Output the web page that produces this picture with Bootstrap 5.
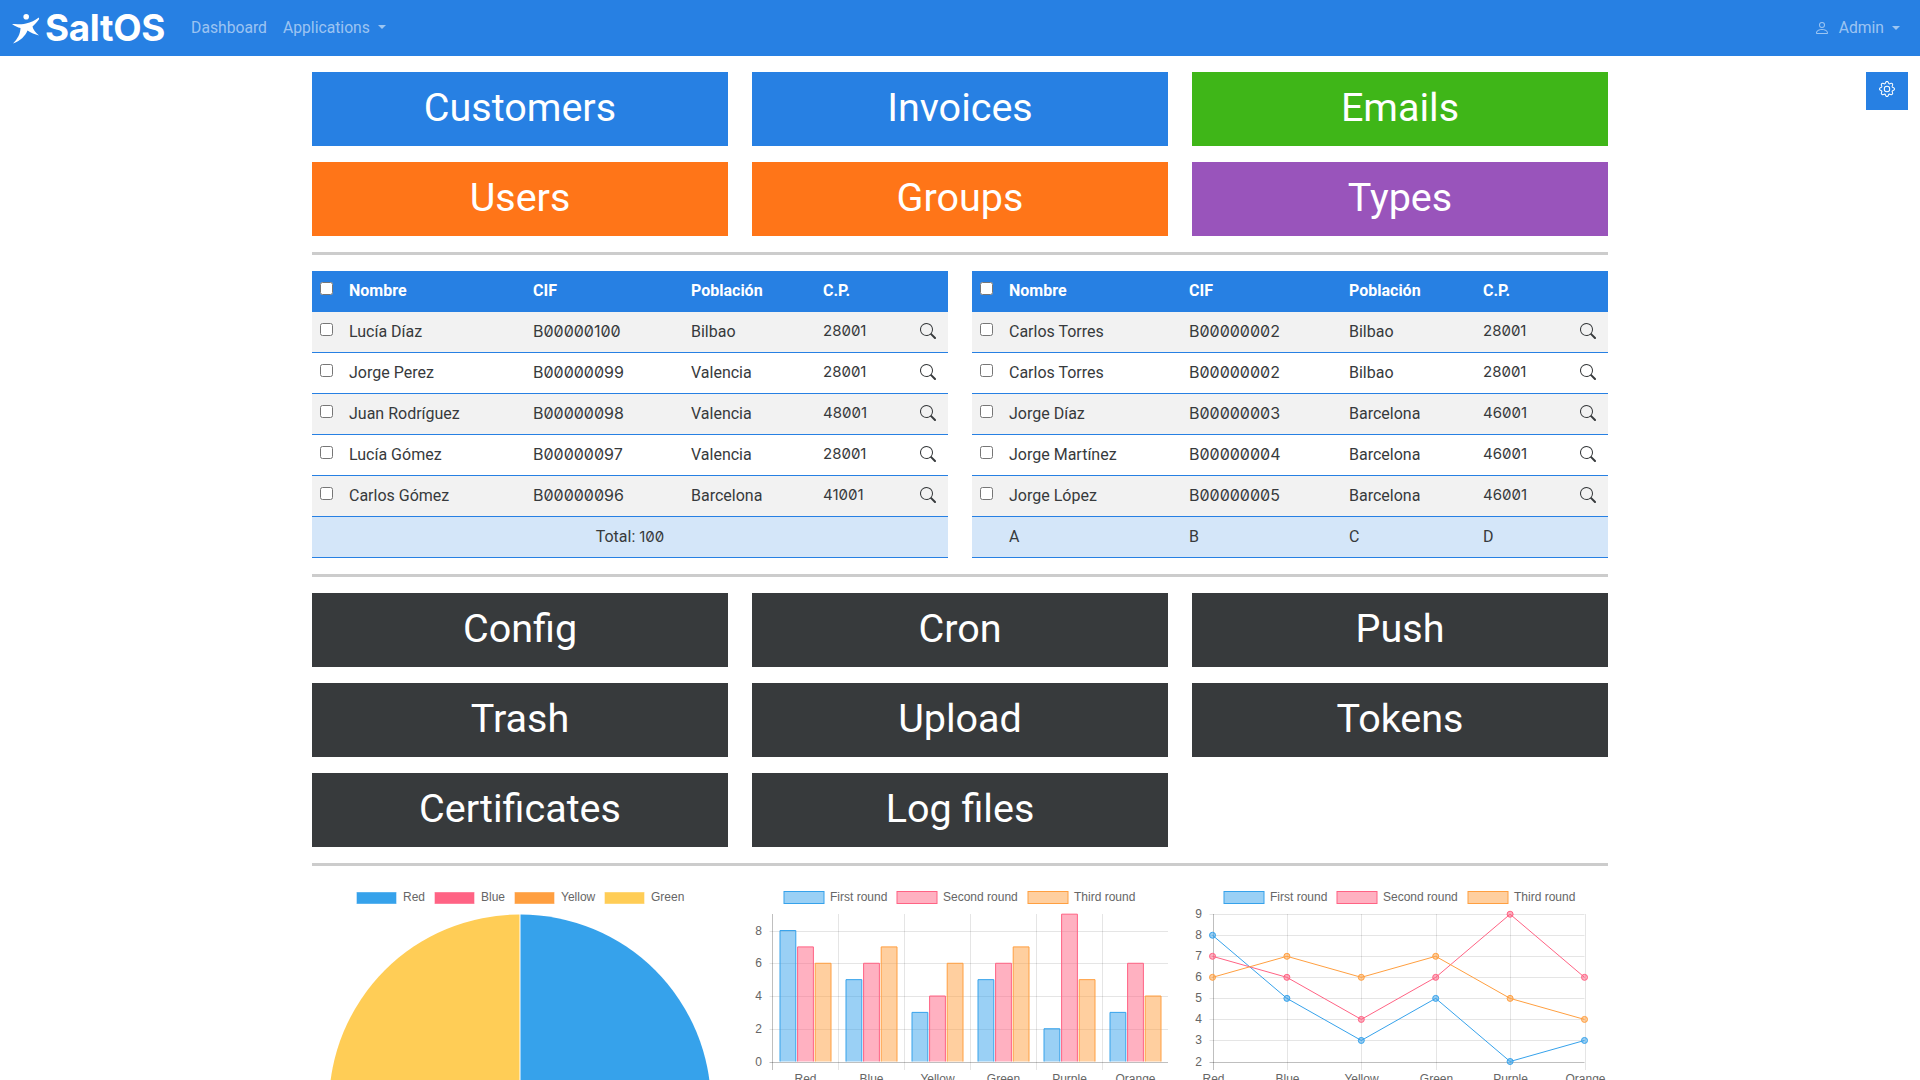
<!DOCTYPE html>
<html lang="en">
  <head>
    <meta charset="UTF-8" />
    <meta name="viewport" content="width=device-width, initial-scale=1.0" />
    <title>SaltOS</title>
    <link
      href="https://cdn.jsdelivr.net/npm/bootstrap@5.3.5/dist/css/bootstrap.min.css"
      rel="stylesheet"
    />
    <style>
      html,
      body {
        height: 100vh;
        overflow: hidden;
      }
      body {
        font-family: Roboto, "Liberation Sans", sans-serif;
        color: #373a3c;
      }
      .app-navbar {
        background: #2780e3;
        height: 56px;
        padding: 0;
      }
      .app-navbar .container-fluid {
        padding: 0 12px;
      }
      .app-navbar .nav-link {
        font-size: 15.7px;
      }
      .app-navbar .dropdown-toggle::after {
        margin-left: 8px;
      }
      .brand-text {
        font-family: Inter, sans-serif;
        font-weight: 700;
        font-size: 36.8px;
        line-height: 40px;
        color: #fff;
        letter-spacing: -0.3px;
      }
      .app-brand {
        padding: 0;
        margin-right: 18px;
        gap: 5px;
      }
      .brand-icon {
        margin-top: 1px;
      }
      .user-icon {
        margin-right: 9px;
      }
      .settings-btn {
        position: absolute;
        top: 72px;
        right: 12px;
        width: 42px;
        height: 38px;
        border-radius: 0;
        background: #2780e3;
        border: 0;
        padding: 0 0 4px;
        display: flex;
        align-items: center;
        justify-content: center;
      }
      .page-wrap {
        width: 1296px;
        margin: 16px auto 0;
      }
      .big-btn {
        display: block;
        width: 100%;
        border-radius: 0;
        font-size: 39.5px;
        line-height: 60px;
        padding: 5px 12px 7px;
        color: #fff;
        border: 1px solid transparent;
      }
      .big-blue {
        background: #2780e3;
      }
      .big-green {
        background: #3fb618;
      }
      .big-orange {
        background: #ff7518;
      }
      .big-purple {
        background: #9954bb;
      }
      .big-dark {
        background: #373a3c;
      }
      .btn-grid {
        display: grid;
        grid-template-columns: repeat(3, 416px);
        gap: 16px 24px;
      }
      .sep-line {
        height: 3px;
        background: #ccc;
        margin: 16px 0 16px;
        border: 0;
        opacity: 1;
      }
      .tables-row {
        display: grid;
        grid-template-columns: 636px 636px;
        gap: 24px;
      }
      .data-table {
        table-layout: fixed;
        width: 100%;
        margin: 0;
        --bs-table-color: #373a3c;
        font-size: 16px;
      }
      .data-table th,
      .data-table td {
        padding: 8px;
        line-height: 24px;
        vertical-align: top;
        border-bottom: 1px solid #2780e3;
        overflow: hidden;
        white-space: nowrap;
      }
      .data-table thead th {
        background: #2780e3;
        color: #fff;
        font-weight: 700;
      }
      .data-table tbody tr:nth-child(odd) td {
        background: #f2f2f2;
      }
      .data-table tfoot td {
        background: #d4e6f9;
      }
      .data-table input {
        display: block;
        width: 13px;
        height: 13px;
        margin: 3px 0 0;
      }
      .num-cell {
        font-family: Inter, sans-serif;
        font-size: 15px;
        font-variant-numeric: slashed-zero;
        font-feature-settings: "zero" 1;
      }
      .data-table td.num-cell {
        padding-top: 7px;
        padding-bottom: 9px;
      }
      .data-table td.cif-cell {
        font-size: 16px;
      }
      .lens {
        display: block;
        margin: 3px 0 0 9px;
      }
      .chart-row {
        display: grid;
        grid-template-columns: repeat(3, 416px);
        gap: 24px;
        margin-top: -2px;
      }
      .chart-row svg {
        display: block;
      }
      .chart-row text {
        font-family: "Liberation Sans", sans-serif;
        font-size: 12px;
        fill: #666;
      }
    </style>
    <script src="https://cdn.jsdelivr.net/npm/bootstrap@5.3.5/dist/js/bootstrap.bundle.min.js"></script>
  </head>
  <body>
    <nav class="navbar navbar-expand-lg navbar-dark app-navbar">
      <div class="container-fluid">
        <a href="#" class="navbar-brand app-brand d-flex align-items-center">
          <svg class="brand-icon" width="28" height="30" viewBox="0 0 28 30" fill="#fff">
            <circle cx="14.2" cy="2.8" r="2.8" />
            <path d="M0 10 C5 9.5 10 11 14 9.5 C19 8.5 23 6.5 26.8 3.5 L27.2 5 C25 8 22.5 10.5 20.5 12.5 C21 15.5 23.5 18.5 27 21.5 C23 20.5 18.5 18.5 15.5 16.5 C13.5 22 8 27 1 29.5 C5.5 25 8.5 19.5 8.5 14 C5.5 13.5 3 12 0 10 Z" />
          </svg>
          <span class="brand-text">SaltOS</span>
        </a>
        <ul class="navbar-nav me-auto">
          <li class="nav-item"><a href="#" class="nav-link">Dashboard</a></li>
          <li class="nav-item dropdown">
            <a href="#" class="nav-link dropdown-toggle" data-bs-toggle="dropdown">Applications</a>
          </li>
        </ul>
        <ul class="navbar-nav">
          <li class="nav-item dropdown">
            <a href="#" class="nav-link dropdown-toggle d-flex align-items-center" data-bs-toggle="dropdown">
              <svg class="user-icon" width="16" height="16" viewBox="0 0 16 16" fill="currentColor">
                <path d="M8 8a3 3 0 1 0 0-6 3 3 0 0 0 0 6Zm2-3a2 2 0 1 1-4 0 2 2 0 0 1 4 0Zm4 8c0 1-1 1-1 1H3s-1 0-1-1 1-4 6-4 6 3 6 4Zm-1-.004c-.001-.246-.154-.986-.832-1.664C11.516 10.68 10.289 10 8 10c-2.29 0-3.516.68-4.168 1.332-.678.678-.83 1.418-.832 1.664h10Z" />
              </svg>
              Admin
            </a>
          </li>
        </ul>
      </div>
    </nav>

    <button class="btn settings-btn" type="button" aria-label="Settings">
      <svg width="16" height="16" viewBox="0 0 16 16" fill="#fff">
        <path d="M8 4.754a3.246 3.246 0 1 0 0 6.492 3.246 3.246 0 0 0 0-6.492ZM5.754 8a2.246 2.246 0 1 1 4.492 0 2.246 2.246 0 0 1-4.492 0Z" />
        <path d="M9.796 1.343c-.527-1.79-3.065-1.79-3.592 0l-.094.319a.873.873 0 0 1-1.255.52l-.292-.16c-1.64-.892-3.433.902-2.54 2.541l.159.292a.873.873 0 0 1-.52 1.255l-.319.094c-1.79.527-1.79 3.065 0 3.592l.319.094a.873.873 0 0 1 .52 1.255l-.16.292c-.892 1.64.901 3.434 2.541 2.54l.292-.159a.873.873 0 0 1 1.255.52l.094.319c.527 1.79 3.065 1.79 3.592 0l.094-.319a.873.873 0 0 1 1.255-.52l.292.16c1.64.893 3.434-.902 2.54-2.541l-.159-.292a.873.873 0 0 1 .52-1.255l.319-.094c1.79-.527 1.79-3.065 0-3.592l-.319-.094a.873.873 0 0 1-.52-1.255l.16-.292c.893-1.64-.902-3.433-2.541-2.54l-.292.159a.873.873 0 0 1-1.255-.52l-.094-.319Zm-2.633.283c.246-.835 1.428-.835 1.674 0l.094.319a1.873 1.873 0 0 0 2.693 1.115l.291-.16c.764-.415 1.6.42 1.184 1.185l-.159.292a1.873 1.873 0 0 0 1.116 2.692l.318.094c.835.246.835 1.428 0 1.674l-.319.094a1.873 1.873 0 0 0-1.115 2.693l.16.291c.415.764-.42 1.6-1.185 1.184l-.291-.159a1.873 1.873 0 0 0-2.693 1.116l-.094.318c-.246.835-1.428.835-1.674 0l-.094-.319a1.873 1.873 0 0 0-2.692-1.115l-.292.16c-.764.415-1.6-.42-1.184-1.185l.159-.291A1.873 1.873 0 0 0 1.945 8.93l-.319-.094c-.835-.246-.835-1.428 0-1.674l.319-.094A1.873 1.873 0 0 0 3.06 4.377l-.16-.292c-.415-.764.42-1.6 1.185-1.184l.292.159a1.873 1.873 0 0 0 2.692-1.115l.094-.319Z" />
      </svg>
    </button>

    <main class="page-wrap">
      <div class="btn-grid">
        <a href="#" class="btn big-btn big-blue">Customers</a>
        <a href="#" class="btn big-btn big-blue">Invoices</a>
        <a href="#" class="btn big-btn big-green">Emails</a>
        <a href="#" class="btn big-btn big-orange">Users</a>
        <a href="#" class="btn big-btn big-orange">Groups</a>
        <a href="#" class="btn big-btn big-purple">Types</a>
      </div>
      <hr class="sep-line" />
      <div class="tables-row">
        <div id="tableLeft"></div>
        <div id="tableRight"></div>
      </div>
      <hr class="sep-line" />
      <div class="btn-grid">
        <a href="#" class="btn big-btn big-dark">Config</a>
        <a href="#" class="btn big-btn big-dark">Cron</a>
        <a href="#" class="btn big-btn big-dark">Push</a>
        <a href="#" class="btn big-btn big-dark">Trash</a>
        <a href="#" class="btn big-btn big-dark">Upload</a>
        <a href="#" class="btn big-btn big-dark">Tokens</a>
        <a href="#" class="btn big-btn big-dark">Certificates</a>
        <a href="#" class="btn big-btn big-dark">Log files</a>
      </div>
      <hr class="sep-line" />
      <div class="chart-row">
        <svg id="chartPie" width="416" height="200"></svg>
        <svg id="chartBar" width="416" height="210"></svg>
        <svg id="chartLine" width="416" height="210"></svg>
      </div>
    </main>

    <script>
      const lens =
        '<svg class="lens" width="16" height="16" viewBox="0 0 16 16" fill="#373a3c"><path d="M11.742 10.344a6.5 6.5 0 1 0-1.397 1.398h-.001c.03.04.062.078.098.115l3.85 3.85a1 1 0 0 0 1.415-1.414l-3.85-3.85a1.007 1.007 0 0 0-.115-.1zM12 6.5a5.5 5.5 0 1 1-11 0 5.5 5.5 0 0 1 11 0z"/></svg>';

      function buildTable(target, widths, rows, foot) {
        let html = '<table class="table data-table"><colgroup>';
        for (let i = 0; i < widths.length; i++) {
          html += `<col style="width:${widths[i]}px">`;
        }
        html += "</colgroup><thead><tr><th><input type='checkbox'></th>";
        html += "<th>Nombre</th><th>CIF</th><th>Población</th><th>C.P.</th><th></th></tr></thead><tbody>";
        for (let i = 0; i < rows.length; i++) {
          html += `<tr><td><input type="checkbox"></td><td>${rows[i][0]}</td><td class="num-cell cif-cell">${rows[i][1]}</td><td>${rows[i][2]}</td><td class="num-cell">${rows[i][3]}</td><td>${lens}</td></tr>`;
        }
        html += `</tbody><tfoot>${foot}</tfoot></table>`;
        document.querySelector(target).innerHTML = html;
      }

      buildTable(
        "#tableLeft",
        [29, 184, 158, 132, 88, 45],
        [
          ["Lucía Díaz", "B00000100", "Bilbao", "28001"],
          ["Jorge Perez", "B00000099", "Valencia", "28001"],
          ["Juan Rodríguez", "B00000098", "Valencia", "48001"],
          ["Lucía Gómez", "B00000097", "Valencia", "28001"],
          ["Carlos Gómez", "B00000096", "Barcelona", "41001"],
        ],
        '<tr><td colspan="6" class="text-center">Total: <span class="num-cell">100</span></td></tr>'
      );

      buildTable(
        "#tableRight",
        [29, 180, 160, 134, 88, 45],
        [
          ["Carlos Torres", "B00000002", "Bilbao", "28001"],
          ["Carlos Torres", "B00000002", "Bilbao", "28001"],
          ["Jorge Díaz", "B00000003", "Barcelona", "46001"],
          ["Jorge Martínez", "B00000004", "Barcelona", "46001"],
          ["Jorge López", "B00000005", "Barcelona", "46001"],
        ],
        "<tr><td></td><td>A</td><td>B</td><td>C</td><td>D</td><td></td></tr>"
      );

      const blue = "54,162,235";
      const pink = "255,99,132";
      const orange = "255,159,64";
      const yellow = "255,205,86";
      const grid = "rgba(0,0,0,0.1)";
      const axis = "rgba(0,0,0,0.25)";
      const labels = ["Red", "Blue", "Yellow", "Green", "Purple", "Orange"];
      const rounds = [
        { name: "First round", color: blue, data: [8, 5, 3, 5, 2, 3] },
        { name: "Second round", color: pink, data: [7, 6, 4, 6, 9, 6] },
        { name: "Third round", color: orange, data: [6, 7, 6, 7, 5, 4] },
      ];
      // svg coords start at x of column, y 0 = page y 880

      function line(x1, y1, x2, y2, color) {
        return `<line x1="${x1}" y1="${y1}" x2="${x2}" y2="${y2}" stroke="${color}"/>`;
      }

      function text(x, y, value, anchor) {
        return `<text x="${x}" y="${y}" text-anchor="${anchor}">${value}</text>`;
      }

      function roundLegend(xs) {
        let out = "";
        for (let i = 0; i < rounds.length; i++) {
          const c = rounds[i].color;
          out += `<rect x="${xs[i]}" y="11.5" width="40" height="12" fill="rgba(${c},0.5)" stroke="rgb(${c})"/>`;
          out += text(xs[i] + 46, 21, rounds[i].name, "start");
        }
        return out;
      }

      function drawPie() {
        const names = ["Red", "Blue", "Yellow", "Green"];
        const colors = [blue, pink, orange, yellow];
        const xs = [45, 123, 203, 293];
        let out = "";
        for (let i = 0; i < 4; i++) {
          out += `<rect x="${xs[i]}" y="12.5" width="39" height="11" fill="rgb(${colors[i]})" stroke="rgba(${colors[i]},0.6)"/>`;
          out += text(xs[i] + 46, 21, names[i], "start");
        }
        out += '<path d="M208.5 225 V34.5 A190.5 190.5 0 0 1 399 225 Z" fill="rgb(54,162,235)"/>';
        out += '<path d="M207.5 225 V34.5 A190.5 190.5 0 0 0 17 225 Z" fill="rgb(255,205,86)"/>';
        document.querySelector("#chartPie").innerHTML = out;
      }

      function drawBar() {
        const left = 20.5;
        const step = 66;
        const zero = 181.5;
        const unit = 16.37;
        let out = "";
        for (let v = 0; v <= 8; v += 2) {
          const y = Math.round(zero - v * unit) + 0.5;
          out += line(left - 3, y, 416, y, v === 0 ? axis : grid);
          out += text(left - 10.5, y + 3, v, "end");
        }
        for (let i = 0; i < 6; i++) {
          const x = left + i * step;
          out += line(x, 34, x, 190, i === 0 ? axis : grid);
          out += text(x + step / 2, 203, labels[i], "middle");
        }
        for (let r = 0; r < 3; r++) {
          const c = rounds[r].color;
          for (let i = 0; i < 6; i++) {
            const center = left + step * (i + 0.5) + (r - 1) * 17.6;
            const top = zero - rounds[r].data[i] * unit;
            out += `<rect x="${center - 7.9}" y="${top}" width="15.8" height="${zero - top}" fill="rgba(${c},0.5)"/>`;
            out += `<path d="M${center - 7.9} ${zero} V${top} H${center + 7.9} V${zero}" fill="none" stroke="rgb(${c})"/>`;
          }
        }
        out += roundLegend([32, 145, 276]);
        document.querySelector("#chartBar").innerHTML = out;
      }

      function drawLine() {
        const left = 20.5;
        const step = 74.4;
        const low = 181.5;
        const unit = 21.04;
        let out = "";
        for (let v = 2; v <= 9; v++) {
          const y = Math.round(low - (v - 2) * unit) + 0.5;
          out += line(left - 3, y, left + 5 * step, y, v === 2 ? axis : grid);
          out += text(left - 10.5, y + 3, v, "end");
        }
        for (let i = 0; i < 6; i++) {
          const x = Math.round(left + i * step) + 0.5;
          out += line(x, 34, x, 190, i === 0 ? axis : grid);
          out += text(x, 203, labels[i], "middle");
        }
        for (let r = 0; r < 3; r++) {
          const c = rounds[r].color;
          let pts = "";
          let dots = "";
          for (let i = 0; i < 6; i++) {
            const x = left + i * step;
            const y = low - (rounds[r].data[i] - 2) * unit;
            pts += `${x},${y} `;
            dots += `<circle cx="${x}" cy="${y}" r="3" fill="rgba(${c},0.5)" stroke="rgb(${c})"/>`;
          }
          out += `<polyline points="${pts}" fill="none" stroke="rgb(${c})"/>` + dots;
        }
        out += roundLegend([32, 145, 276]);
        document.querySelector("#chartLine").innerHTML = out;
      }

      drawPie();
      drawBar();
      drawLine();
    </script>
  </body>
</html>
